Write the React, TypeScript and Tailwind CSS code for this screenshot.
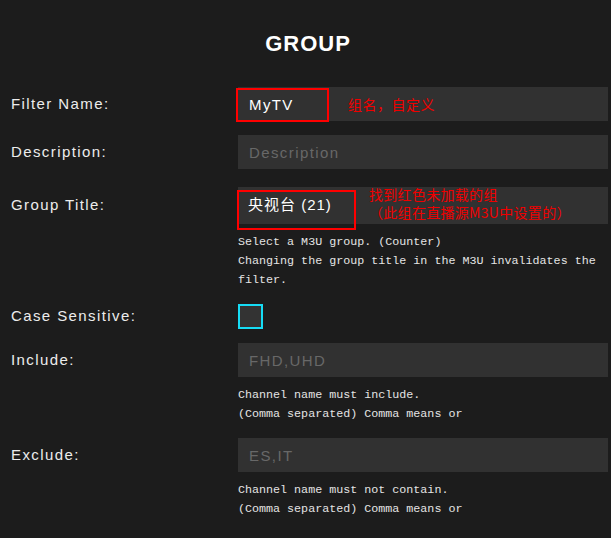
import React from "react";

const labelCls =
  "w-[227px] shrink-0 text-[15px] tracking-[1.4px] text-[#ececec] font-['Liberation_Sans',Arial,sans-serif]";
const inputCls =
  "w-full h-[34px] bg-[#313131] pl-[11px] text-[15px] tracking-[1.4px] text-white outline-none placeholder:text-[#686868] font-['Liberation_Sans',Arial,sans-serif]";
const helpCls =
  "mt-[9px] text-[11.7px] leading-[19px] text-[#e4e4e4] font-['Liberation_Mono','Courier_New',monospace]";

const App: React.FC = () => {
  return (
    <div className="min-h-[538px] w-full bg-[#1c1c1c] pl-[11px] pr-[3px]">
      {/* Title */}
      <div className="h-[87px] flex items-center justify-center pr-[3px]">
        <h1 className="text-[22px] font-bold tracking-[1px] text-white font-['Liberation_Sans',Arial,sans-serif]">
          GROUP
        </h1>
      </div>

      {/* Filter Name */}
      <div className="flex items-center">
        <div className={labelCls}>Filter Name:</div>
        <div className="relative flex-1">
          <input className={inputCls} readOnly value="MyTV" />
          <div className="absolute left-[-2px] top-[1px] w-[93px] h-[34px] border-2 border-[#ff0000]" />
          <div className="absolute left-[110px] top-0 h-[34px] flex items-center text-[14px] tracking-[0.5px] text-[#f00000] font-['Noto_Sans_CJK_SC',sans-serif]">
            组名，自定义
          </div>
        </div>
      </div>

      {/* Description */}
      <div className="flex items-center mt-[14px]">
        <div className={labelCls}>Description:</div>
        <div className="flex-1">
          <input className={inputCls} readOnly placeholder="Description" />
        </div>
      </div>

      {/* Group Title */}
      <div className="flex mt-[18px]">
        <div className={labelCls + " h-[37px] flex items-center"}>Group Title:</div>
        <div className="flex-1">
          <div className="relative">
            <div className="h-[37px] bg-[#313131] pl-[10px] flex items-center text-[15px] tracking-[1px] text-white font-['Liberation_Sans','Noto_Sans_CJK_SC',sans-serif]">
              央视台 (21)
            </div>
            <div className="absolute left-[-1px] top-[3px] w-[119px] h-[40px] border-2 border-[#ff0000]" />
            <div className="absolute left-[131px] top-[-2px] text-[14px] leading-[18px] tracking-[0.3px] text-[#f00000] font-['Noto_Sans_CJK_SC',sans-serif]">
              <div>找到红色未加载的组</div>
              <div>（此组在直播源M3U中设置的）</div>
            </div>
          </div>
          <div className={helpCls}>
            Select a M3U group. (Counter)
            <br />
            Changing the group title in the M3U invalidates the filter.
          </div>
        </div>
      </div>

      {/* Case Sensitive */}
      <div className="flex items-center mt-[14px]">
        <div className={labelCls}>Case Sensitive:</div>
        <div className="flex-1">
          <div className="w-[25px] h-[25px] bg-[#333333] border-2 border-[#16dcf5]" />
        </div>
      </div>

      {/* Include */}
      <div className="flex mt-[14px]">
        <div className={labelCls + " h-[34px] flex items-center"}>Include:</div>
        <div className="flex-1">
          <input className={inputCls} readOnly placeholder="FHD,UHD" />
          <div className={helpCls}>
            Channel name must include.
            <br />
            (Comma separated) Comma means or
          </div>
        </div>
      </div>

      {/* Exclude */}
      <div className="flex mt-[14px]">
        <div className={labelCls + " h-[34px] flex items-center"}>Exclude:</div>
        <div className="flex-1">
          <input className={inputCls} readOnly placeholder="ES,IT" />
          <div className={helpCls}>
            Channel name must not contain.
            <br />
            (Comma separated) Comma means or
          </div>
        </div>
      </div>
    </div>
  );
};

export default App;
